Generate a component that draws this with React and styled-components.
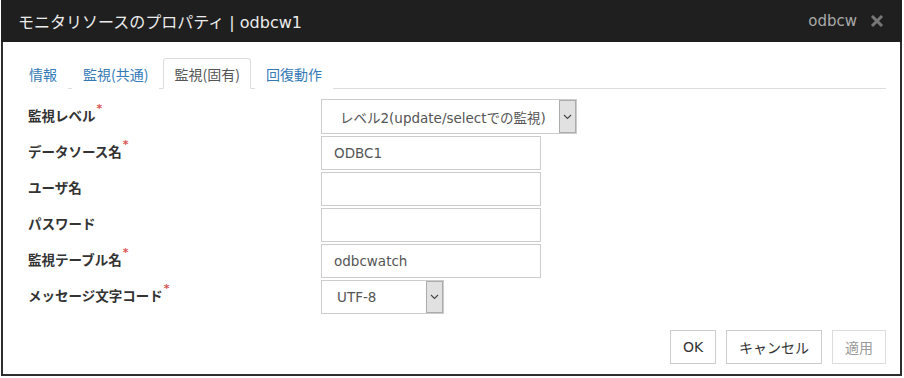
import React from "react";
import styled, { createGlobalStyle } from "styled-components";

const Global = createGlobalStyle`
  html, body { margin: 0; padding: 0; background: #fff; }
  body { font-family: "DejaVu Sans", "Noto Sans CJK JP", sans-serif; }
  * { box-sizing: border-box; }
`;

const Dialog = styled.div`
  width: 901px;
  height: 376px;
  margin-left: 1px;
  border: 2px solid #2e2e2e;
  border-top: none;
  display: flex;
  flex-direction: column;
  background: #fff;
`;

const Header = styled.div`
  height: 42px;
  background: #1f1f1f;
  display: flex;
  align-items: center;
  margin: 0 -2px;
  padding: 0 18px 0 17px;
  color: #ececec;
`;

const Title = styled.div`
  font-size: 16px;
  flex: 1;
`;

const HeaderRight = styled.div`
  display: flex;
  align-items: center;
  gap: 13px;
  color: #a9a9a9;
  font-size: 15px;
`;

const Body = styled.div`
  flex: 1;
  display: flex;
  flex-direction: column;
  padding: 16px 14px 10px 15px;
`;

const TabBar = styled.div`
  display: flex;
  gap: 4px;
  border-bottom: 1px solid #ddd;
  height: 31px;
`;

const Tab = styled.div`
  height: 31px;
  padding: 0 10px;
  display: flex;
  align-items: center;
  font-family: "Noto Sans CJK JP", sans-serif;
  font-size: 14px;
  color: ${(p) => (p.$active ? "#555" : "#337ab7")};
  border: 1px solid ${(p) => (p.$active ? "#ddd" : "transparent")};
  border-bottom-color: ${(p) => (p.$active ? "#fff" : "transparent")};
  border-radius: 3px 3px 0 0;
  background: #fff;
  margin-bottom: -1px;
`;

const Form = styled.div`
  display: grid;
  grid-template-columns: 293px auto;
  row-gap: 2px;
  padding: 10px 0 0 10px;
  align-items: center;
  justify-items: start;
`;

const Label = styled.div`
  font-size: 13.5px;
  font-weight: bold;
  color: #333;
  display: flex;
  align-items: flex-start;
  padding-bottom: 4px;
`;

const Req = styled.span`
  color: #d9534f;
  font-size: 11px;
  line-height: 1;
  margin-left: 1px;
  margin-top: -2px;
`;

const Input = styled.div`
  width: ${(p) => p.$w}px;
  height: 34px;
  border: 1px solid #ccc;
  display: flex;
  align-items: center;
  padding-left: 12px;
  font-size: 13.5px;
  color: #555;
`;

const Select = styled.div`
  width: ${(p) => p.$w}px;
  height: ${(p) => p.$h || 34}px;
  border: 1px solid #ccc;
  display: flex;
  align-items: stretch;
  font-size: 13.5px;
  color: #555;
`;

const SelectText = styled.div`
  flex: 1;
  display: flex;
  align-items: center;
  padding-left: ${(p) => p.$pl}px;
`;

const Arrow = styled.div`
  width: 17px;
  background: #e1e1e1;
  border: 1px solid #acacac;
  display: flex;
  align-items: center;
  justify-content: center;
`;

const Footer = styled.div`
  margin-top: auto;
  display: flex;
  justify-content: flex-end;
  gap: 10px;
`;

const Button = styled.div`
  height: 34px;
  width: ${(p) => p.$w}px;
  border: 1px solid ${(p) => (p.$disabled ? "#ddd" : "#ccc")};
  display: flex;
  align-items: center;
  justify-content: center;
  font-size: 14px;
  color: ${(p) => (p.$disabled ? "#9a9a9a" : "#333")};
`;

const Chevron = () => (
  <svg width="9" height="6" viewBox="0 0 9 6">
    <path d="M1 1 L4.5 4.5 L8 1" fill="none" stroke="#444" strokeWidth="1.1" />
  </svg>
);

const Close = () => (
  <svg width="14" height="14" viewBox="0 0 14 14">
    <path d="M2 2 L12 12 M12 2 L2 12" stroke="#777" strokeWidth="3" />
  </svg>
);

const Field = ({ label, req, children }) => (
  <>
    <Label>
      {label}
      {req && <Req>*</Req>}
    </Label>
    {children}
  </>
);

export default function App() {
  return (
    <>
      <Global />
      <Dialog>
        <Header>
          <Title>モニタリソースのプロパティ | odbcw1</Title>
          <HeaderRight>
            <span>odbcw</span>
            <Close />
          </HeaderRight>
        </Header>
        <Body>
          <TabBar>
            <Tab>情報</Tab>
            <Tab>監視(共通)</Tab>
            <Tab $active>監視(固有)</Tab>
            <Tab>回復動作</Tab>
          </TabBar>
          <Form>
            <Field label="監視レベル" req>
              <Select $w={256} $h={35}>
                <SelectText $pl={18}>レベル2(update/selectでの監視)</SelectText>
                <Arrow>
                  <Chevron />
                </Arrow>
              </Select>
            </Field>
            <Field label="データソース名" req>
              <Input $w={220}>ODBC1</Input>
            </Field>
            <Field label="ユーザ名">
              <Input $w={220} />
            </Field>
            <Field label="パスワード">
              <Input $w={220} />
            </Field>
            <Field label="監視テーブル名" req>
              <Input $w={220}>odbcwatch</Input>
            </Field>
            <Field label="メッセージ文字コード" req>
              <Select $w={123}>
                <SelectText $pl={15}>UTF-8</SelectText>
                <Arrow>
                  <Chevron />
                </Arrow>
              </Select>
            </Field>
          </Form>
          <Footer>
            <Button $w={46}>OK</Button>
            <Button $w={96}>キャンセル</Button>
            <Button $w={54} $disabled>
              適用
            </Button>
          </Footer>
        </Body>
      </Dialog>
    </>
  );
}
